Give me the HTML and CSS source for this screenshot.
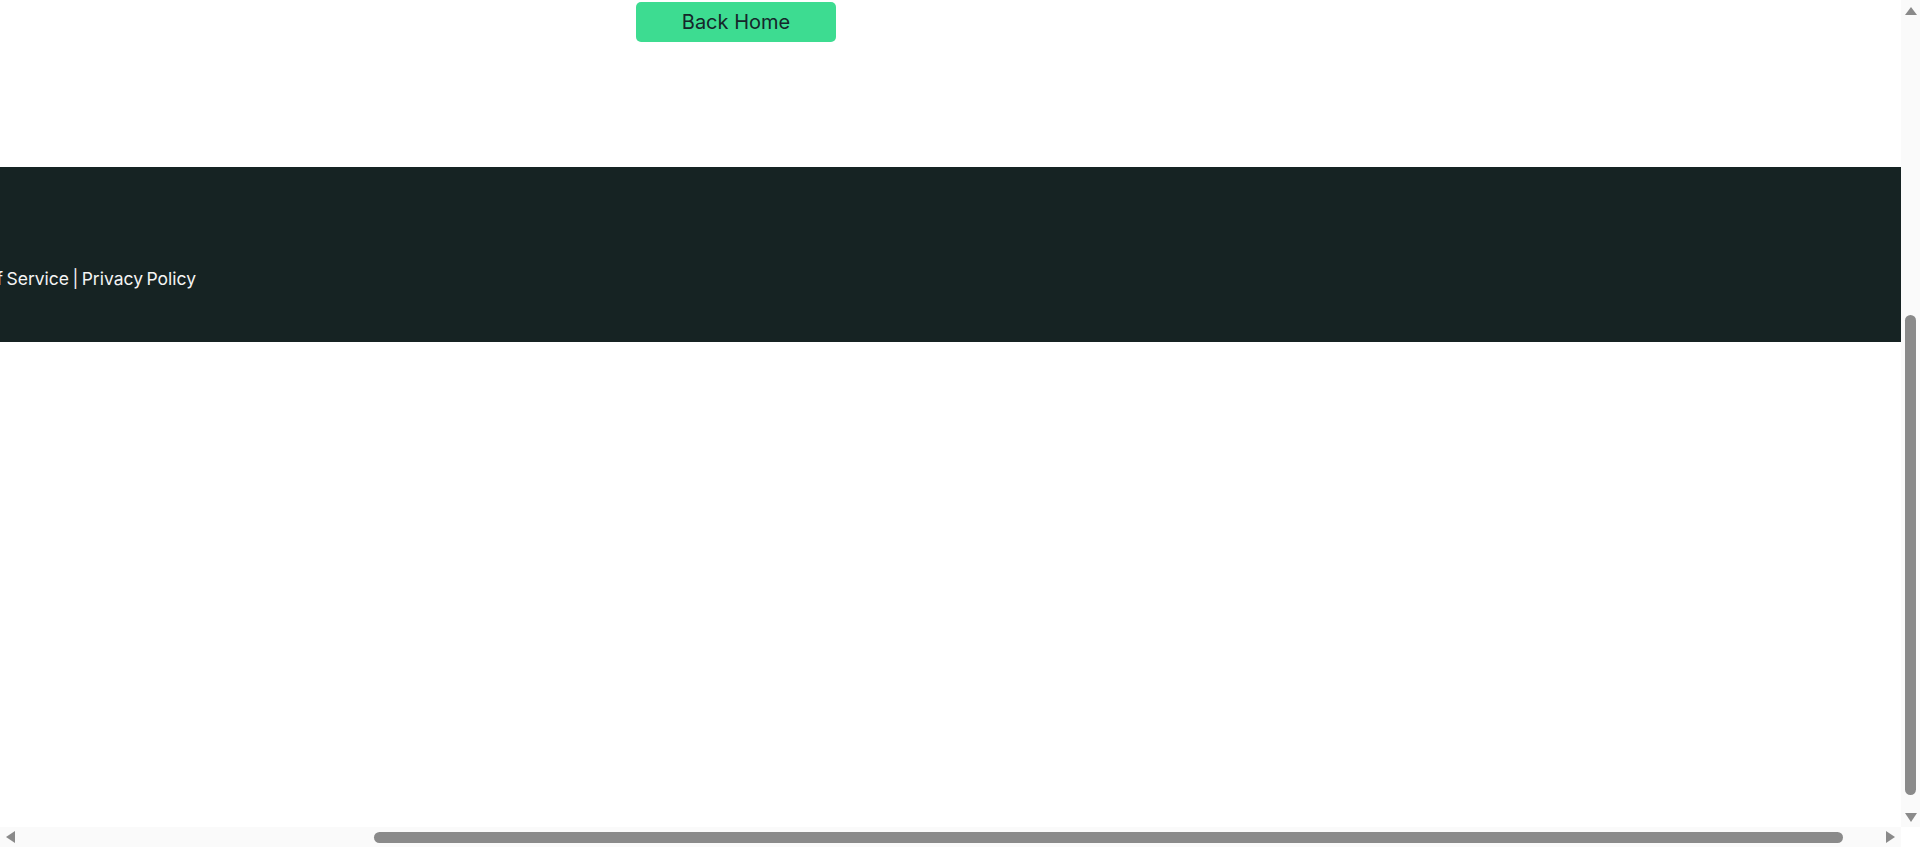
FILE: index.html
```html
<!DOCTYPE html>
<html lang="en">
<head>
<meta charset="utf-8">
<title>Back Home</title>
<link rel="stylesheet" href="styles.css">
</head>
<body>
<div class="screen">
  <div class="viewport">
    <div class="page">
      <div class="hero">
        <a class="btn" href="#">Back Home</a>
      </div>
      <footer class="footer">
        <div class="footer-links">
          <span class="footer-text">Terms of Service | Privacy Policy</span>
        </div>
      </footer>
    </div>
  </div>
  <div class="vbar">
    <svg class="arrow-v" width="12" height="8" viewBox="0 0 12 8"><path d="M6 0 L12 8 L0 8 Z" fill="#8a8a8a"/></svg>
    <div class="vthumb"></div>
    <svg class="arrow-v down" width="12" height="9" viewBox="0 0 12 9"><path d="M0 0 L12 0 L6 9 Z" fill="#8a8a8a"/></svg>
  </div>
  <div class="hbar">
    <svg class="arrow-h" width="9" height="12" viewBox="0 0 9 12"><path d="M9 0 L9 12 L0 6 Z" fill="#8a8a8a"/></svg>
    <div class="hthumb"></div>
    <svg class="arrow-h right" width="9" height="12" viewBox="0 0 9 12"><path d="M0 0 L9 6 L0 12 Z" fill="#8a8a8a"/></svg>
  </div>
  <div class="corner"></div>
</div>
</body>
</html>
```
FILE: styles.css
```css
html, body {
  margin: 0;
  padding: 0;
  background: #ffffff;
  overflow: hidden;
}

.screen {
  width: 1920px;
  height: 847px;
  display: grid;
  grid-template-columns: 1901px 19px;
  grid-template-rows: 827px 20px;
  font-family: Inter, "DejaVu Sans", sans-serif;
}

.viewport {
  overflow: hidden;
  background: #ffffff;
}

.page {
  display: flex;
  flex-direction: column;
}

.hero {
  height: 167px;
  padding: 2px 0 0 636px;
  box-sizing: border-box;
}

.btn {
  display: flex;
  align-items: center;
  justify-content: center;
  width: 200px;
  height: 40px;
  border-radius: 5px;
  background: #3ddc91;
  color: #15262a;
  font-size: 20px;
  text-decoration: none;
}

.footer {
  height: 175px;
  background: #162323;
  box-sizing: border-box;
  padding-top: 99px;
}

.footer-links {
  width: 196px;
  display: flex;
  justify-content: flex-end;
}

.footer-text {
  white-space: nowrap;
  color: #f4f4f4;
  font-size: 17.5px;
  line-height: 26px;
  word-spacing: -1.5px;
}

.vbar {
  background: #fafafa;
  display: flex;
  flex-direction: column;
  align-items: center;
  padding: 7px 0 5px;
  box-sizing: border-box;
}

.vthumb {
  width: 11px;
  height: 480px;
  margin-top: 300px;
  border-radius: 6px;
  background: #8a8a8a;
}

.arrow-v {
  display: block;
  flex: none;
}

.arrow-v.down {
  margin-top: 18px;
}

.hbar {
  background: #fafafa;
  display: flex;
  align-items: center;
  padding: 0 6px;
}

.hthumb {
  width: 1469px;
  height: 11px;
  margin-left: 359px;
  border-radius: 6px;
  background: #8a8a8a;
}

.arrow-h {
  display: block;
  flex: none;
}

.arrow-h.right {
  margin-left: 43px;
}

.corner {
  background: #ffffff;
}
```
